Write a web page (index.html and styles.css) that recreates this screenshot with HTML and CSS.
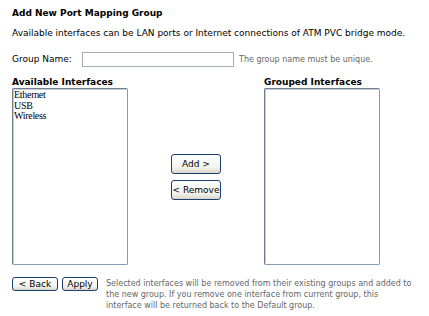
FILE: index.html
```html
<!DOCTYPE html>
<html lang="en">
<head>
    <meta charset="UTF-8">
    <title>Port Mapping</title>
    <link rel="stylesheet" href="styles.css">
</head>
<body>
    <div class="page">
        <div class="title">Add New Port Mapping Group</div>
        <p class="intro">Available interfaces can be LAN ports or Internet connections of ATM PVC bridge mode.</p>

        <div class="name-row">
            <label class="name-label">Group Name:</label>
            <input type="text" class="name-input">
            <span class="hint">The group name must be unique.</span>
        </div>

        <div class="lists">
            <div class="list-col">
                <div class="list-head">Available Interfaces</div>
                <select class="listbox" multiple size="16">
                    <option>Ethernet</option>
                    <option>USB</option>
                    <option>Wireless</option>
                </select>
            </div>
            <div class="mover">
                <button class="btn move">Add &gt;</button>
                <button class="btn move">&lt; Remove</button>
            </div>
            <div class="list-col">
                <div class="list-head">Grouped Interfaces</div>
                <select class="listbox" multiple size="16"></select>
            </div>
        </div>

        <div class="footer">
            <div class="actions">
                <button class="btn back">&lt; Back</button>
                <button class="btn apply">Apply</button>
            </div>
            <p class="note">Selected interfaces will be removed from their existing groups and added to the new group. If you remove one interface from current group, this interface will be returned back to the Default group.</p>
        </div>
    </div>
</body>
</html>
```

FILE: styles.css
```css
body {
    margin: 0;
    padding: 0;
    background-color: #ffffff;
    font-family: "DejaVu Sans", Verdana, sans-serif;
    font-size: 9px;
    color: #000000;
}

.page {
    padding: 8px 12px 0 12px;
}

.title {
    font-weight: bold;
    font-size: 9px;
    line-height: 11px;
}

.intro {
    margin: 9px 0 0 0;
    line-height: 11px;
}

.name-row {
    display: flex;
    align-items: center;
    margin-top: 12px;
    height: 16px;
}

    .name-row .name-label {
        width: 70px;
    }

    .name-row .name-input {
        width: 146px;
        height: 11px;
        margin: 0;
        padding: 1px 2px;
        border: 1px solid #a5acb5;
        font-size: 9px;
    }

    .name-row .hint {
        margin-left: 5px;
        font-size: 8px;
        color: #666666;
    }

.lists {
    display: flex;
    margin-top: 10px;
}

.list-col {
    display: flex;
    flex-direction: column;
}

    .list-col .list-head {
        font-weight: bold;
        line-height: 11px;
        height: 11px;
    }

.listbox {
    width: 116px;
    height: 177px;
    margin: 0;
    padding: 0 1px;
    border: 1px solid #7f9db9;
    border-left-color: #6f7f93;
    border-top-color: #6f7f93;
    box-shadow: inset 1px 1px 0 #c8ccd2;
    font-family: "Liberation Serif", "Times New Roman", serif;
    font-size: 10px;
    letter-spacing: -0.3px;
    outline: none;
    overflow: hidden;
}

    .listbox option {
        padding: 0;
        height: 10.5px;
        line-height: 10px;
        min-height: 0;
    }

.mover {
    display: flex;
    flex-direction: column;
    align-items: center;
    justify-content: center;
    width: 136px;
    padding-top: 11px;
    gap: 6px;
}

.btn {
    font-family: "DejaVu Sans", Verdana, sans-serif;
    font-size: 9px;
    color: #000000;
    margin: 0;
    padding: 0;
    border: 1px solid #1b3f72;
    border-radius: 3px;
    background: linear-gradient(#ffffff, #f3f3ee 70%, #d9d6c8);
    cursor: pointer;
}

    .btn.move {
        width: 50px;
        height: 20px;
    }

.footer {
    display: flex;
    align-items: flex-start;
    margin-top: 11px;
}

.actions {
    display: flex;
    gap: 4px;
    padding-top: 1px;
}

    .actions .back {
        width: 46px;
        height: 14px;
    }

    .actions .apply {
        width: 36px;
        height: 14px;
    }

.note {
    margin: 2px 0 0 8px;
    width: 310px;
    font-size: 8px;
    line-height: 11px;
    color: #666666;
}
```
